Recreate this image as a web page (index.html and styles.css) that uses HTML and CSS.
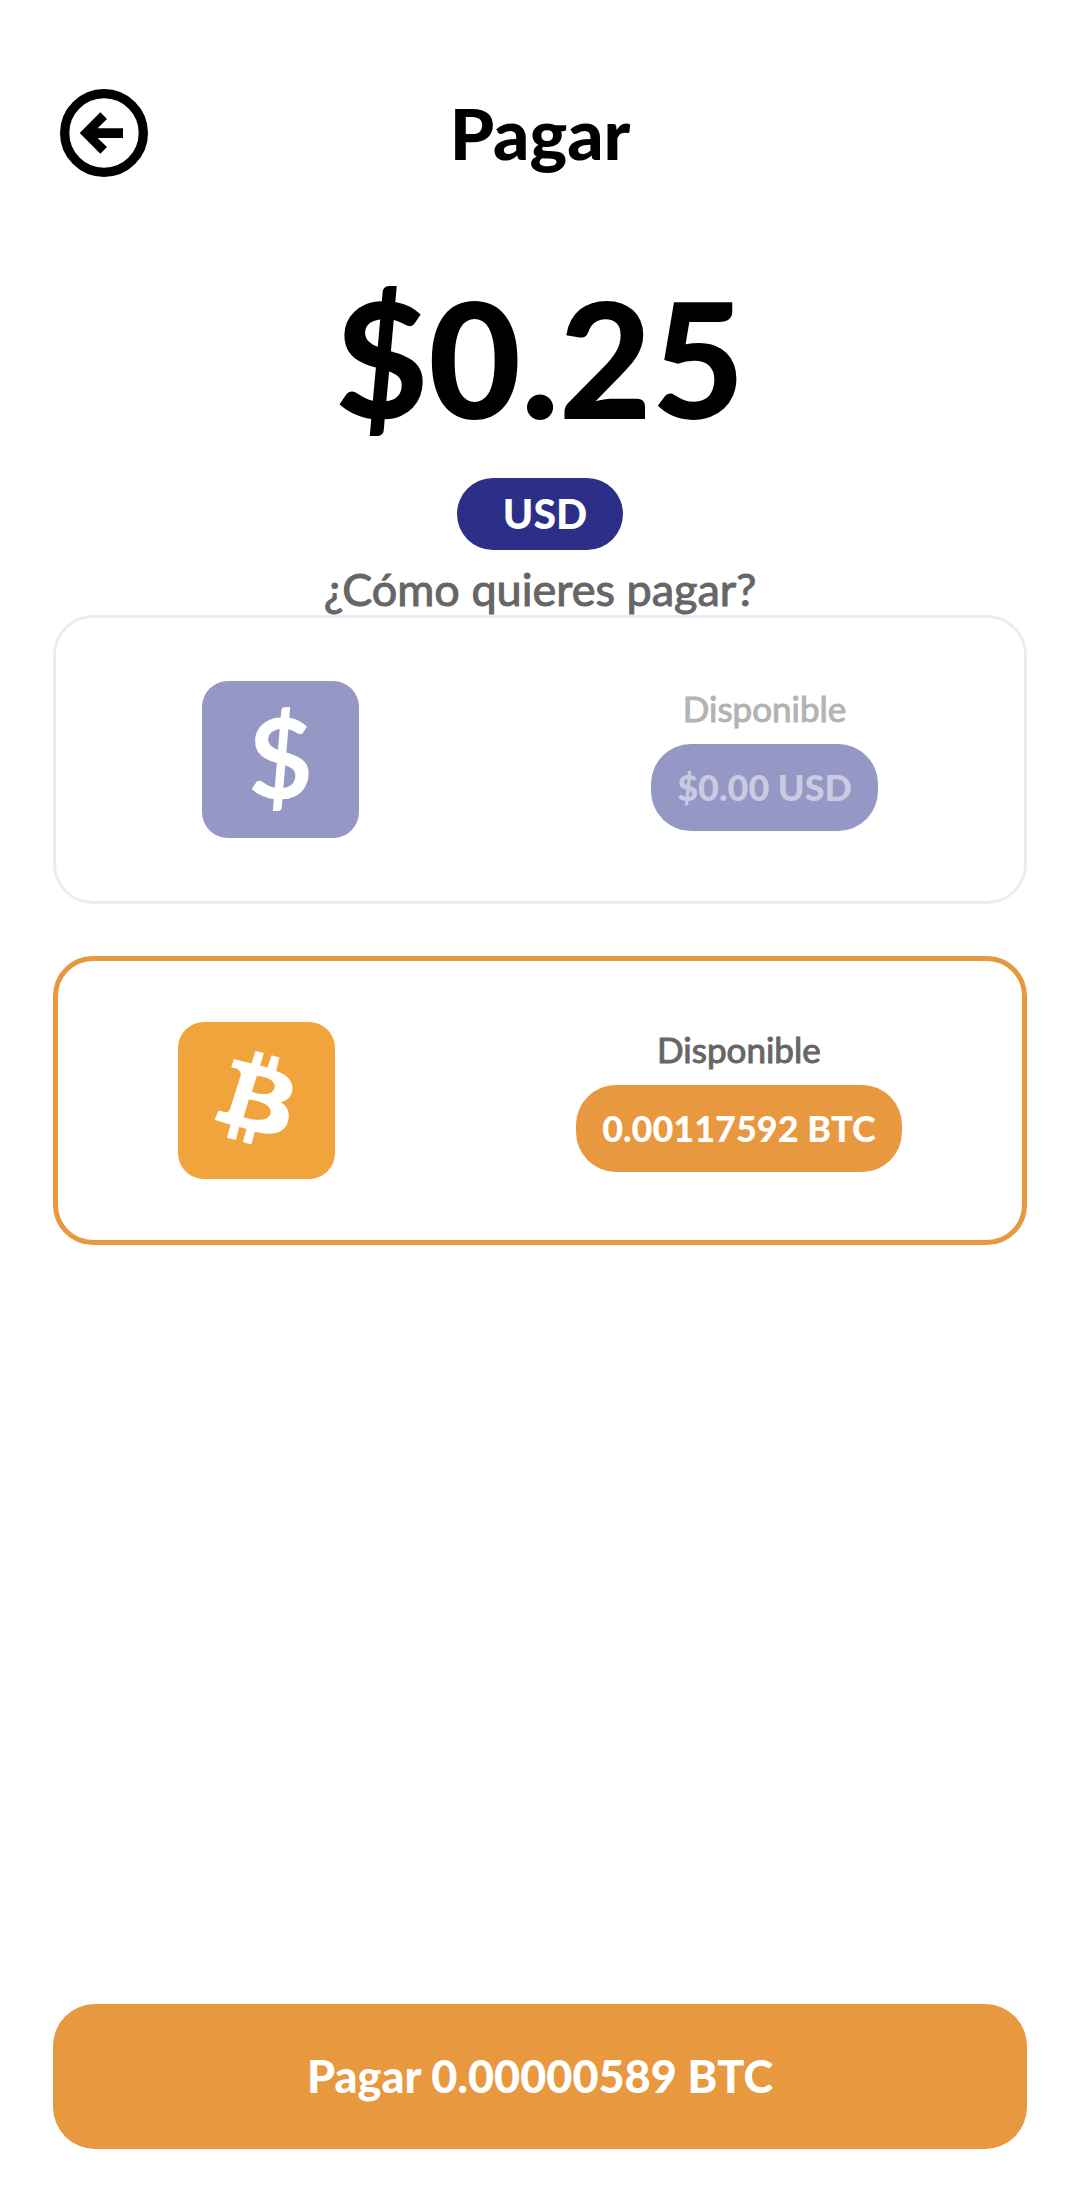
FILE: index.html
```html
<!DOCTYPE html>
<html lang="es">
<head>
<meta charset="utf-8">
<meta name="viewport" content="width=device-width, initial-scale=1">
<title>Pagar</title>
<link rel="stylesheet" href="styles.css">
</head>
<body>
<div class="screen">
  <header class="topbar">
    <button class="back" type="button" aria-label="Volver">
      <svg class="back-icon" viewBox="0 0 264 264" aria-hidden="true">
        <circle cx="132" cy="132" r="118" fill="none" stroke="#000" stroke-width="28"/>
        <path d="M59 132 121 70l20 20-28 28h76v29h-76l28 27-20 20z"/>
      </svg>
    </button>
    <h1 class="title">Pagar</h1>
  </header>

  <main class="content">
    <p class="amount">$0.25</p>
    <button class="currency" type="button">USD</button>
    <p class="question">¿Cómo quieres pagar?</p>

    <div class="methods">
      <button class="method method-usd" type="button" disabled>
        <span class="tile">$</span>
        <span class="balance">
          <span class="balance-label">Disponible</span>
          <span class="pill">$0.00 USD</span>
        </span>
      </button>
      <button class="method method-btc" type="button" aria-pressed="true">
        <span class="tile">
          <svg class="btc-icon" viewBox="0 0 472 472" aria-hidden="true">
            <path fill="#fff" fill-rule="evenodd" d="M233 87l25 6-11 38 22 6 12-37 24 7-10 40c30 9 51 29 49 55-2 24-18 35-35 39 19 11 27 28 23 52-7 38-41 52-101 37l-10 38-26-7 11-39-22-6-10 39-27-7 11-39-48-15 12-28 12 3c12 4 19 3 22-6l32-101c3-12-3-18-16-23l-12-2 8-26 53 14zM237 162l-15 48c28 9 61 12 68-11 7-24-25-35-53-37zM213 233l-16 53c34 10 74 15 81-10 7-28-35-40-65-43z"/>
          </svg>
        </span>
        <span class="balance">
          <span class="balance-label">Disponible</span>
          <span class="pill">0.00117592 BTC</span>
        </span>
      </button>
    </div>
  </main>

  <footer class="footer">
    <button class="pay" type="button">Pagar 0.00000589 BTC</button>
  </footer>
</div>
</body>
</html>
```
FILE: styles.css
```css
* {
  box-sizing: border-box;
}

body {
  margin: 0;
  background: #fff;
  color: #000;
  font-family: Lato, "Liberation Sans", sans-serif;
}

button {
  margin: 0;
  padding: 0;
  border: 0;
  background: none;
  color: inherit;
  font: inherit;
}

h1,
p {
  margin: 0;
}

.screen {
  display: flex;
  flex-direction: column;
  min-height: 100vh;
  padding: 89px 53px 52px;
}

.topbar {
  display: grid;
  grid-template-columns: 1fr auto 1fr;
  align-items: center;
  padding: 0 7px;
}

.back {
  width: 88px;
  height: 88px;
}

.back-icon {
  display: block;
  width: 88px;
  height: 88px;
}

.title {
  font-size: 71px;
  line-height: 88px;
  font-weight: 900;
}

.content {
  display: flex;
  flex: 1;
  flex-direction: column;
  align-items: center;
}

.amount {
  margin-top: 80px;
  font-size: 160px;
  line-height: 200px;
  font-weight: 900;
}

.currency {
  margin-top: 21px;
  padding: 0 36px 0 46px;
  border-radius: 36px;
  background: #2b2f88;
  color: #fff;
  font-size: 41px;
  line-height: 72px;
  font-weight: 900;
}

.question {
  margin-top: 14px;
  color: #666;
  font-size: 45px;
  line-height: 51px;
  -webkit-text-stroke: 1px #666;
}

.methods {
  display: flex;
  flex-direction: column;
  gap: 52px;
  width: 100%;
}

.method {
  display: flex;
  align-items: center;
  justify-content: space-around;
  min-height: 289px;
  border: 3px solid #ebebf3;
  border-radius: 40px;
  background: #fff;
}

.method-btc {
  border: 5px solid #e8983e;
}

.tile {
  display: flex;
  align-items: center;
  justify-content: center;
  width: 157px;
  height: 157px;
  padding-bottom: 8px;
  border-radius: 26px;
  background: #9597c4;
  color: #fff;
  font-size: 112px;
  line-height: 149px;
  font-weight: 700;
}

.method-btc .tile {
  padding: 0;
  background: #f2a43c;
}

.btc-icon {
  width: 100%;
  height: 100%;
}

.balance {
  display: flex;
  flex-direction: column;
  align-items: center;
  gap: 16px;
}

.balance-label {
  color: #666;
  font-size: 35px;
  line-height: 40px;
  -webkit-text-stroke: 1px currentColor;
}

.pill {
  padding: 0 26px;
  border-radius: 40px;
  background: #e8983e;
  color: #fff;
  font-size: 36px;
  line-height: 87px;
  font-weight: 900;
}

.method-usd .balance-label {
  color: #b3b3b3;
}

.method-usd .pill {
  background: #9597c4;
  color: #cacbe2;
}

.footer {
  display: flex;
}

.pay {
  flex: 1;
  border-radius: 42px;
  background: #e8983e;
  color: #fff;
  font-size: 45px;
  line-height: 145px;
  font-weight: 900;
}
```
